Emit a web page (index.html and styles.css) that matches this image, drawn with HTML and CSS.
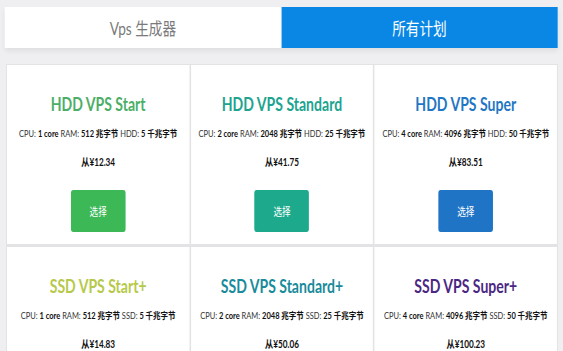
FILE: index.html
```html
<!DOCTYPE html>
<html lang="zh">
<head>
  <meta charset="UTF-8" />
  <title>VPS 计划</title>
  <link rel="stylesheet" href="styles.css">
</head>
<body>
  <div class="page">
    <div class="tabs">
      <div class="tab">Vps 生成器</div>
      <div class="tab active">所有计划</div>
    </div>

    <div class="plans">
      <div class="plan">
        <h3 class="name c-green">HDD VPS Start</h3>
        <p class="spec">CPU: <b>1 core</b> RAM: <b>512 兆字节</b> HDD: <b>5 千兆字节</b></p>
        <p class="price">从¥12.34</p>
        <button class="pick b-green">选择</button>
      </div>
      <div class="plan">
        <h3 class="name c-teal">HDD VPS Standard</h3>
        <p class="spec">CPU: <b>2 core</b> RAM: <b>2048 兆字节</b> HDD: <b>25 千兆字节</b></p>
        <p class="price">从¥41.75</p>
        <button class="pick b-teal">选择</button>
      </div>
      <div class="plan">
        <h3 class="name c-blue">HDD VPS Super</h3>
        <p class="spec">CPU: <b>4 core</b> RAM: <b>4096 兆字节</b> HDD: <b>50 千兆字节</b></p>
        <p class="price">从¥83.51</p>
        <button class="pick b-blue">选择</button>
      </div>
      <div class="plan">
        <h3 class="name c-lime">SSD VPS Start+</h3>
        <p class="spec">CPU: <b>1 core</b> RAM: <b>512 兆字节</b> SSD: <b>5 千兆字节</b></p>
        <p class="price">从¥14.83</p>
        <button class="pick b-lime">选择</button>
      </div>
      <div class="plan">
        <h3 class="name c-sea">SSD VPS Standard+</h3>
        <p class="spec">CPU: <b>2 core</b> RAM: <b>2048 兆字节</b> SSD: <b>25 千兆字节</b></p>
        <p class="price">从¥50.06</p>
        <button class="pick b-sea">选择</button>
      </div>
      <div class="plan">
        <h3 class="name c-purple">SSD VPS Super+</h3>
        <p class="spec">CPU: <b>4 core</b> RAM: <b>4096 兆字节</b> SSD: <b>50 千兆字节</b></p>
        <p class="price">从¥100.23</p>
        <button class="pick b-purple">选择</button>
      </div>
    </div>
  </div>
</body>
</html>
```

FILE: styles.css
```css
html, body {
  overflow: hidden;
}
body {
  margin: 0;
  background: #efeff1;
  font-family: Lato, "Noto Sans CJK SC", sans-serif;
  color: #222;
}
/* the whole layout is drawn a bit wider and squeezed horizontally */
.page {
  width: 722px;
  box-sizing: border-box;
  padding: 7px 7px 0 6px;
  transform: scaleX(.78);
  transform-origin: 0 0;
}
.tabs {
  display: flex;
  height: 41px;
  background: #fff;
  box-shadow: 0 3px 6px rgba(0, 0, 0, .07);
}
.tab {
  flex: 1;
  display: flex;
  align-items: center;
  justify-content: center;
  font-size: 17.5px;
  color: #7a7a7a;
}
.tab.active {
  background: #0a87e4;
  color: #fff;
}
.plans {
  display: grid;
  grid-template-columns: repeat(3, 1fr);
  column-gap: 2px;
  row-gap: 3px;
  margin-top: 16px;
  margin-left: 2px;
  background: #e3e3e5;
  border: 1px solid #e3e3e5;
}
.plan {
  background: #fff;
  text-align: center;
  padding: 28px 0 12px;
}
.name {
  margin: 0;
  font-size: 18px;
  line-height: 22px;
  font-weight: 700;
}
.spec {
  margin: 12px 0 0;
  font-size: 9.6px;
  line-height: 14px;
  white-space: nowrap;
  color: #333;
}
.spec b { color: #111; }
.price {
  margin: 14px 0 0;
  font-size: 10.5px;
  line-height: 14px;
  font-weight: 700;
  color: #111;
}
.pick {
  margin-top: 21px;
  width: 70px;
  height: 42px;
  border: none;
  border-radius: 3px;
  color: #fff;
  font-family: inherit;
  font-size: 11px;
  cursor: pointer;
}
.c-green { color: #4cae67; }
.c-teal { color: #20a38f; }
.c-blue { color: #1f77c4; }
.c-lime { color: #b6c94a; }
.c-sea { color: #198b9b; }
.c-purple { color: #4b2783; }
.b-green { background: #3cb857; }
.b-teal { background: #1daa8c; }
.b-blue { background: #1f74c6; }
.b-lime { background: #b6c94a; }
.b-sea { background: #198b9b; }
.b-purple { background: #4b2783; }
```
